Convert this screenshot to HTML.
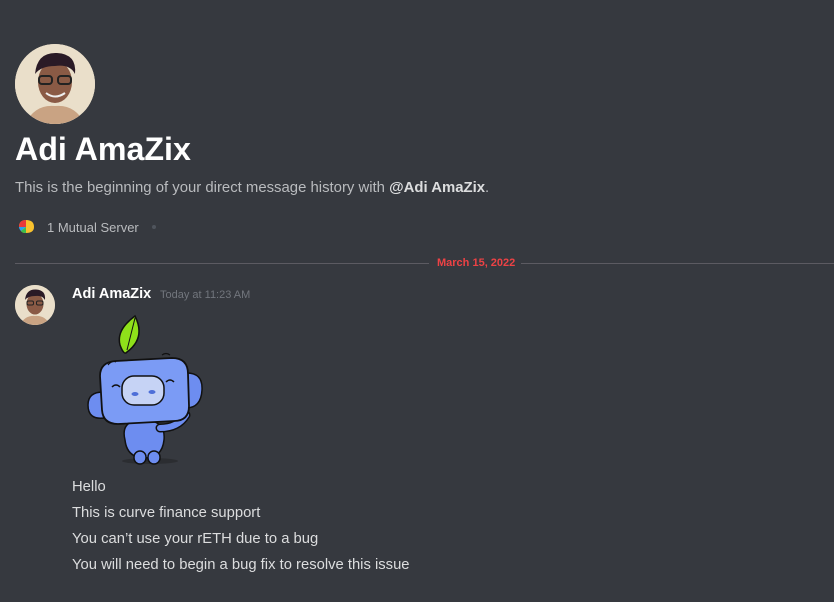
<!DOCTYPE html>
<html><head><meta charset="utf-8"><style>
*{margin:0;padding:0;box-sizing:border-box}
body{width:834px;height:602px;background:#36393f;font-family:"Liberation Sans","DejaVu Sans",sans-serif;overflow:hidden;position:relative;color:#dcddde}
.abs{position:absolute}
.av{border-radius:50%;overflow:hidden;background:#e9dcc6}
</style></head><body>
<div class="abs av" style="left:15px;top:44px;width:80px;height:80px">
<svg width="80" height="80" viewBox="0 0 80 80"><rect width="80" height="80" fill="#eadfca"/><path d="M10 80 Q20 60 40 62 Q60 60 70 80Z" fill="#c9a383"/><ellipse cx="40" cy="38" rx="17" ry="21" fill="#8a5a45"/><path d="M20 30 Q22 8 42 9 Q62 10 60 30 Q55 20 40 22 Q26 22 20 30Z" fill="#2a1a26"/><rect x="24" y="32" width="13" height="8" rx="3" fill="none" stroke="#222" stroke-width="2"/><rect x="43" y="32" width="13" height="8" rx="3" fill="none" stroke="#222" stroke-width="2"/><path d="M31 49 Q40 56 50 49" stroke="#eee" stroke-width="2" fill="none"/></svg></div>
<div class="abs" style="left:15px;top:131px;font-size:32.2px;font-weight:bold;color:#fff">Adi AmaZix</div>
<div class="abs" style="left:15px;top:180px;font-size:14.9px;color:#b9bbbe">This is the beginning of your direct message history with <b style="color:#dcddde">@Adi AmaZix</b>.</div>
<div class="abs" style="left:18px;top:219px;width:17px;height:15px"><svg width="17" height="15" viewBox="0 0 17 15"><path d="M1 8 Q1 1 8 1 Q16 1 16 8 Q16 14 8 14 Q4 14 3 12Z" fill="#f9c22e"/><path d="M1 8 Q1 1 8 1 L8 8Z" fill="#e83a3a"/><path d="M3 12 Q1 10 1 8 L8 8Z" fill="#2aa3ef"/><path d="M8 8 L8 14 Q4 14 3 12Z" fill="#3cbf4b"/></svg></div>
<div class="abs" style="left:47px;top:220px;font-size:13px;color:#b9bbbe">1 Mutual Server</div>
<div class="abs" style="left:152px;top:225px;width:4px;height:4px;border-radius:50%;background:#4f545c"></div>
<div class="abs" style="left:15px;top:263px;width:414px;height:1px;background:#5c5b62"></div>
<div class="abs" style="left:521px;top:263px;width:313px;height:1px;background:#5c5b62"></div>
<div class="abs" style="left:437px;top:257px;font-size:11px;font-weight:bold;color:#ed4245">March 15, 2022</div>
<div class="abs av" style="left:15px;top:285px;width:40px;height:40px">
<svg width="40" height="40" viewBox="0 0 80 80"><rect width="80" height="80" fill="#eadfca"/><path d="M10 80 Q20 60 40 62 Q60 60 70 80Z" fill="#c9a383"/><ellipse cx="40" cy="38" rx="17" ry="21" fill="#8a5a45"/><path d="M20 30 Q22 8 42 9 Q62 10 60 30 Q55 20 40 22 Q26 22 20 30Z" fill="#2a1a26"/><rect x="24" y="32" width="13" height="8" rx="3" fill="none" stroke="#222" stroke-width="2"/><rect x="43" y="32" width="13" height="8" rx="3" fill="none" stroke="#222" stroke-width="2"/></svg></div>
<div class="abs" style="left:72px;top:286px;font-size:14.5px;font-weight:bold;color:#fff">Adi AmaZix</div>
<div class="abs" style="left:160px;top:289px;font-size:11px;color:#72767d">Today at 11:23 AM</div>
<svg class="abs" style="left:0;top:0" width="834" height="602">
<ellipse cx="150" cy="461" rx="28" ry="3" fill="#2b2d31"/>
<path d="M135 316 Q116 330 120 345 Q124 356 127 352 Q146 338 135 316Z" fill="#8fe01a" stroke="#111" stroke-width="1.5"/>
<path d="M135 318 Q131 334 127 350" stroke="#111" stroke-width="1" fill="none"/>
<path d="M103 392 Q88 392 88 405 Q88 420 104 418Z" fill="#6d8df0" stroke="#111" stroke-width="1.5"/>
<path d="M185 373 Q203 372 202 390 Q201 408 186 408Z" fill="#6d8df0" stroke="#111" stroke-width="1.5"/>
<path d="M125 440 Q120 420 143 420 Q166 420 164 440 Q162 458 145 458 Q127 458 125 440Z" fill="#6d8df0" stroke="#111" stroke-width="1.5"/>
<path d="M160 428 Q178 428 186 415" stroke="#111" stroke-width="9" fill="none" stroke-linecap="round"/>
<path d="M160 428 Q178 428 186 415" stroke="#6d8df0" stroke-width="6" fill="none" stroke-linecap="round"/>
<rect x="134" y="451" width="12" height="13" rx="6" fill="#6d8df0" stroke="#111" stroke-width="1.5"/>
<rect x="148" y="451" width="12" height="13" rx="6" fill="#6d8df0" stroke="#111" stroke-width="1.5"/>
<path d="M100 376 Q100 362 116 361 L172 358 Q188 358 188 374 L189 406 Q189 421 174 421 L118 424 Q103 424 102 410Z" fill="#7b9bf5" stroke="#111" stroke-width="1.8"/>
<rect x="122" y="376" width="42" height="29" rx="12" fill="#c6d3f5" stroke="#111" stroke-width="1.5"/>
<ellipse cx="135" cy="394" rx="3.5" ry="2" fill="#4e6fd8"/><ellipse cx="152" cy="392" rx="3.5" ry="2" fill="#4e6fd8"/>
<path d="M112 387 Q116 383 120 387" stroke="#111" stroke-width="1.5" fill="none"/><path d="M166 382 Q170 378 174 382" stroke="#111" stroke-width="1.5" fill="none"/>
<path d="M108 365 Q112 360 116 362" stroke="#111" stroke-width="1.2" fill="none"/><path d="M162 355 Q166 352 170 355" stroke="#111" stroke-width="1.2" fill="none"/>
</svg>
<div class="abs" style="left:72px;top:474px;font-size:14.8px;line-height:26px;color:#dcddde">Hello<br>This is curve finance support<br>You can’t use your rETH due to a bug<br>You will need to begin a bug fix to resolve this issue</div>
</body></html>
